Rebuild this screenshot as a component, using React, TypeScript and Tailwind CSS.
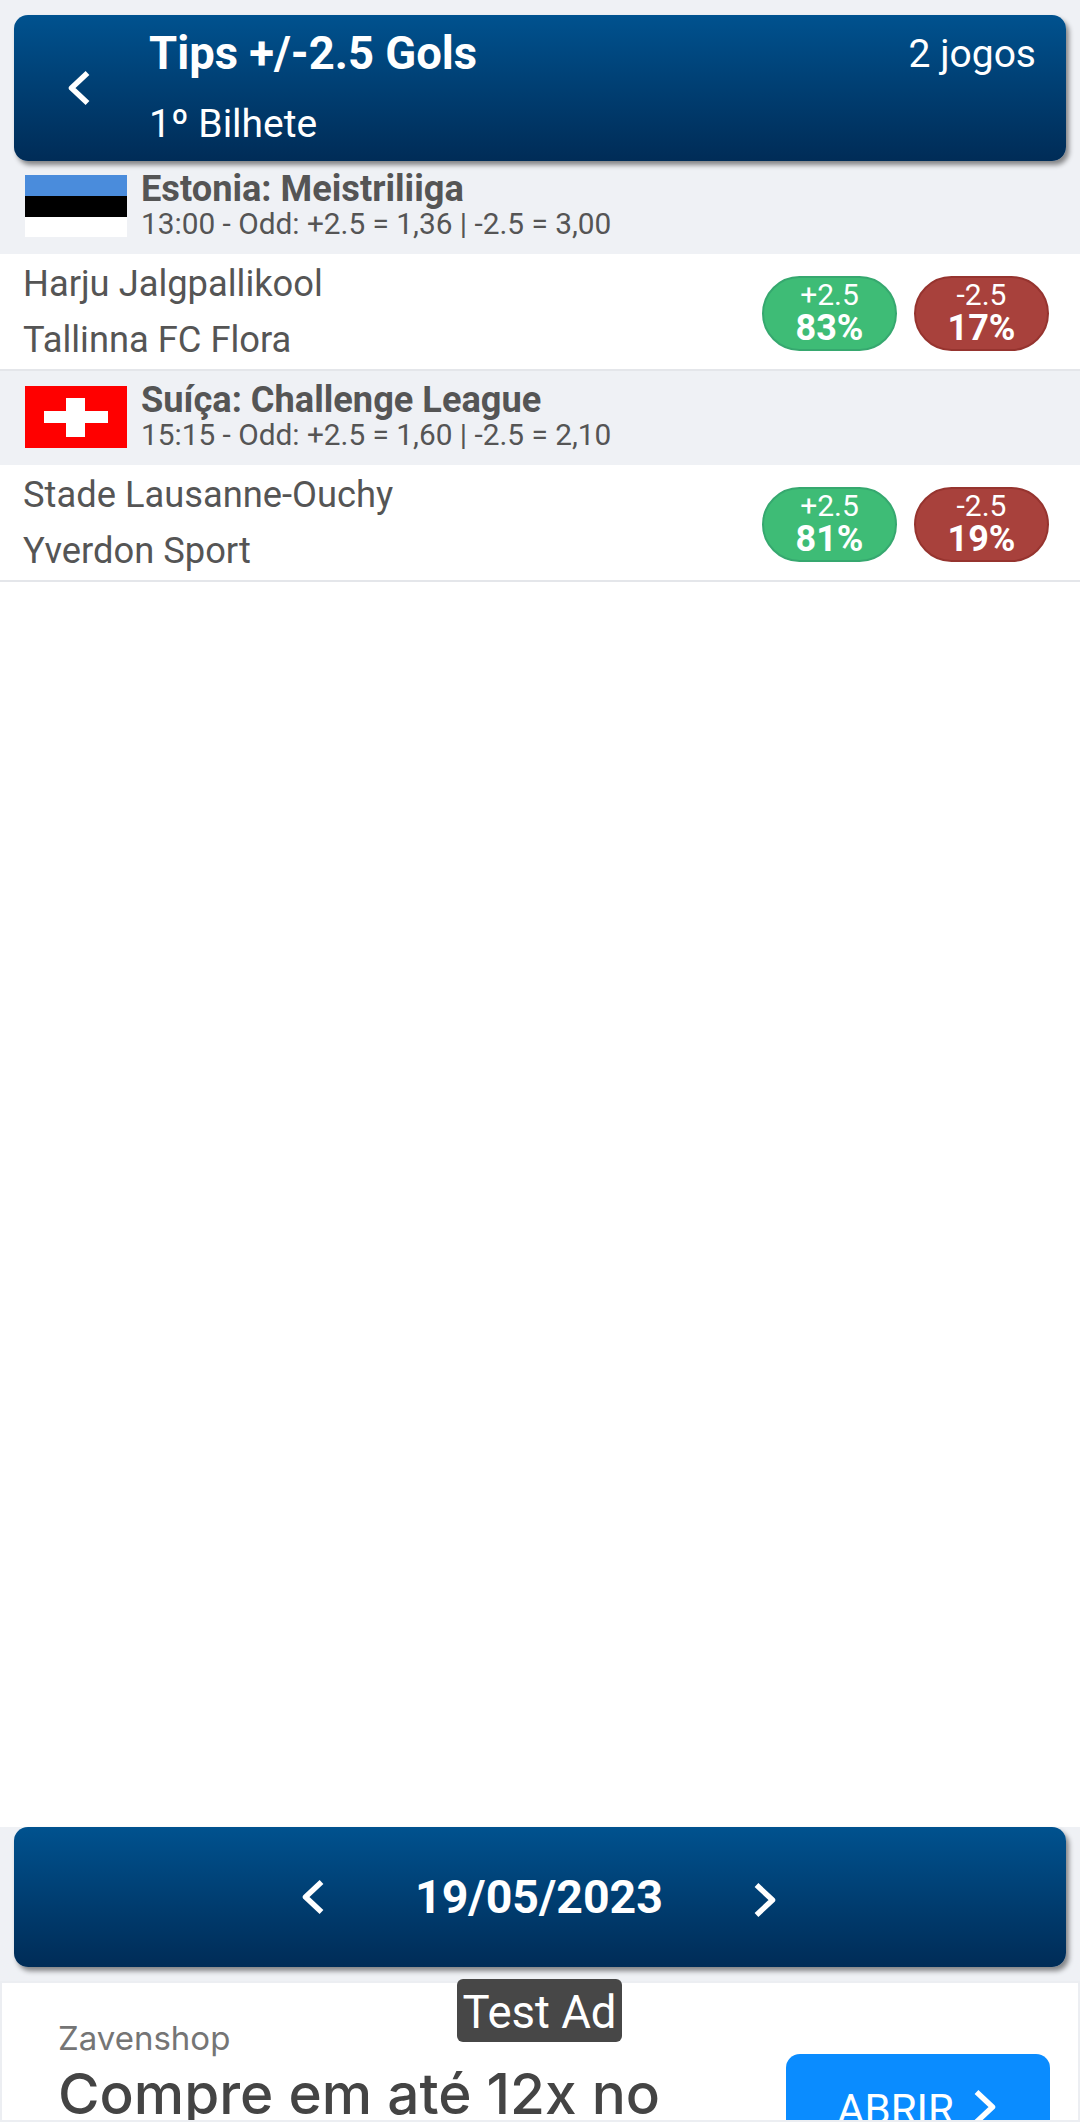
interface Game {
  league: string;
  info: string;
  flag: "ee" | "ch";
  home: string;
  away: string;
  over: string;
  under: string;
}

const games: Game[] = [
  {
    league: "Estonia: Meistriliiga",
    info: "13:00 - Odd: +2.5 = 1,36 | -2.5 = 3,00",
    flag: "ee",
    home: "Harju Jalgpallikool",
    away: "Tallinna FC Flora",
    over: "83%",
    under: "17%",
  },
  {
    league: "Suíça: Challenge League",
    info: "15:15 - Odd: +2.5 = 1,60 | -2.5 = 2,10",
    flag: "ch",
    home: "Stade Lausanne-Ouchy",
    away: "Yverdon Sport",
    over: "81%",
    under: "19%",
  },
];

// lucide's chevrons are too short and wide for this one
const Arrow = ({ right = false, className = "" }: { right?: boolean; className?: string }) => (
  <svg
    className={`h-[34px] w-[23px] shrink-0 ${className}`}
    viewBox="0 0 23 34"
    fill="none"
    stroke="currentColor"
    strokeWidth={5.5}
    strokeLinejoin="round"
  >
    <path d={right ? "M2.5 2 L18.5 17 L2.5 32" : "M20.5 2 L4.5 17 L20.5 32"} />
  </svg>
);

const Flag = ({ flag }: { flag: Game["flag"] }) => {
  if (flag === "ee") {
    return (
      <div className="flex h-[62px] w-[102px] shrink-0 flex-col">
        <div className="h-[21px] bg-[#4a8cdc]" />
        <div className="h-[21px] bg-black" />
        <div className="h-[20px] bg-white" />
      </div>
    );
  }
  return (
    <svg className="h-[62px] w-[102px] shrink-0" viewBox="0 0 102 62">
      <rect width="102" height="62" fill="#ff0000" />
      <rect x="19" y="25" width="64" height="12" fill="#ffffff" />
      <rect x="41" y="12" width="19" height="39" fill="#ffffff" />
    </svg>
  );
};

const Pill = ({ label, value, color }: { label: string; value: string; color: string }) => (
  <div
    className={`flex h-[75px] w-[135px] flex-col items-center justify-center rounded-[38px] border-2 pb-[3px] text-white ${color}`}
  >
    <span className="text-[30px] leading-[32px]">{label}</span>
    <span className="text-[36px] leading-[34px] font-bold">{value}</span>
  </div>
);

const App = () => {
  return (
    <div className="flex h-[2122px] w-[1080px] flex-col overflow-hidden bg-white font-['Roboto',sans-serif]">
      <div className="relative z-10 -mb-[1px] bg-[#eff1f5] px-[14px] pt-[15px]">
        <header className="flex h-[146px] items-stretch rounded-[14px] bg-gradient-to-b from-[#00528f] to-[#002c57] text-white shadow-[3px_4px_5px_rgba(0,0,0,0.45)]">
          <div className="flex w-[135px] items-center pl-[53px]">
            <Arrow />
          </div>
          <div className="flex flex-1 flex-col pt-[13px]">
            <span className="text-[45.4px] leading-[52px] font-bold">Tips +/-2.5 Gols</span>
            <span className="mt-[21px] text-[39px] leading-[46px]">1º Bilhete</span>
          </div>
          <span className="pt-[16px] pr-[30px] text-[39px] leading-[46px]">2 jogos</span>
        </header>
      </div>

      {games.map((game) => (
        <section key={game.league}>
          <div className="flex h-[94px] items-start gap-[14px] bg-[#eff1f5] pt-[15px] pl-[25px]">
            <Flag flag={game.flag} />
            <div className="-mt-[6px] flex flex-col text-[#555555]">
              <span className="text-[36.2px] leading-[40px] font-bold">{game.league}</span>
              <span className="-mt-[2px] text-[29.8px] leading-[34px]">{game.info}</span>
            </div>
          </div>
          <div className="flex h-[117px] items-center justify-between border-b-2 border-[#e4e6ea] bg-white pr-[31px] pl-[23px]">
            <div className="flex flex-col gap-[14px] text-[36.3px] leading-[42px] text-[#555555]">
              <span>{game.home}</span>
              <span>{game.away}</span>
            </div>
            <div className="mt-[4px] flex gap-[17px]">
              <Pill label="+2.5" value={game.over} color="border-[#36a86f] bg-[#3ebc76]" />
              <Pill label="-2.5" value={game.under} color="border-[#96342f] bg-[#a8413c]" />
            </div>
          </div>
        </section>
      ))}

      <div className="flex-1" />

      <div className="bg-[#eff1f5] px-[14px] pb-[14px]">
        <div className="flex h-[140px] items-center justify-center rounded-[14px] bg-gradient-to-b from-[#00528f] to-[#002c57] pr-[2px] text-white shadow-[3px_4px_5px_rgba(0,0,0,0.45)]">
          <Arrow />
          <span className="mx-[91px] text-[46.5px] leading-[54px] font-bold">19/05/2023</span>
          <Arrow right className="mt-[6px]" />
        </div>
      </div>

      <div className="relative h-[141px] border-2 border-[#eceef2] bg-white">
        <span className="absolute -top-[4px] left-[455px] flex h-[63px] w-[165px] items-center justify-center rounded-[6px] bg-[#474747] pt-[5px] text-[45.5px] whitespace-nowrap text-white">
          Test Ad
        </span>
        <div className="flex h-full justify-between overflow-hidden pt-[35px] pr-[28px] pl-[56px]">
          <div className="flex flex-col font-['Inter',sans-serif]">
            <span className="text-[33px] leading-[40px] text-[#757575]">Zavenshop</span>
            <span className="mt-[4px] text-[56.7px] leading-[64px] font-medium whitespace-nowrap text-[#444444]">
              Compre em até 12x no
            </span>
          </div>
          <div className="mt-[36px] flex h-[120px] w-[264px] items-start justify-center gap-[20px] rounded-[14px] bg-[#0a8cff] pt-[24px] pr-[2px] text-[42px] text-white">
            ABRIR
            <Arrow right className="mt-[12px]" />
          </div>
        </div>
      </div>
    </div>
  );
};

export default App;
